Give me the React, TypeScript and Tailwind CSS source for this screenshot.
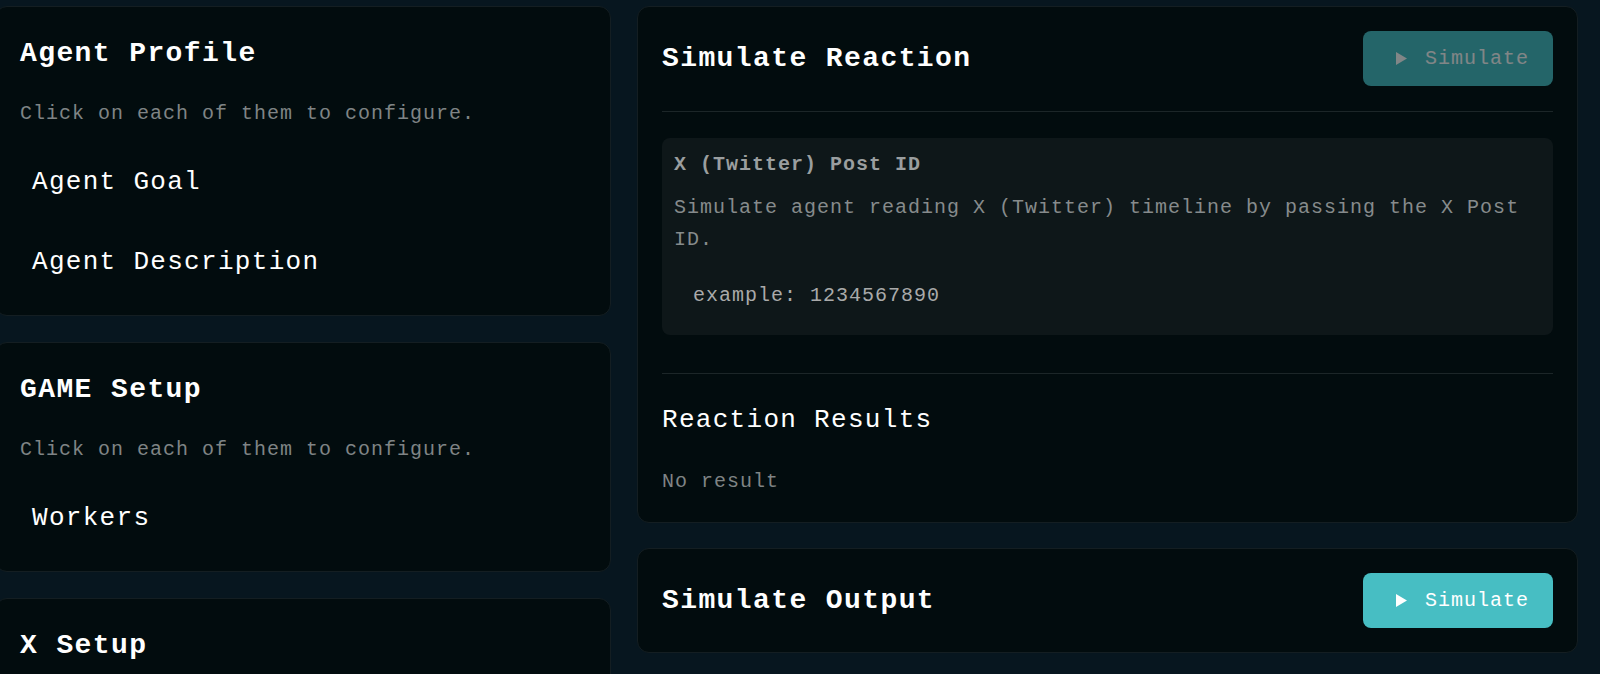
import React from 'react';

const mono = { fontFamily: '"Liberation Mono", "DejaVu Sans Mono", monospace' };

const PlayIcon: React.FC = () => (
  <svg width="11" height="13" viewBox="0 0 11 13" className="shrink-0">
    <polygon points="0,0 11,6.5 0,13" fill="currentColor" />
  </svg>
);

const SimulateButton: React.FC<{ disabled?: boolean }> = ({ disabled }) => (
  <button
    className={
      disabled
        ? 'flex items-center gap-[18px] h-[55px] w-[190px] pl-[33px] rounded-lg bg-[#47bec3] text-white text-[20px] tracking-wider opacity-50'
        : 'flex items-center gap-[18px] h-[55px] w-[190px] pl-[33px] rounded-lg bg-[#47bec3] text-white text-[20px] tracking-wider'
    }
  >
    <PlayIcon />
    <span className="leading-[30px]">Simulate</span>
  </button>
);

const ConfigCard: React.FC<{ title: string; items: string[] }> = ({ title, items }) => (
  <div className="rounded-xl border border-[#141e22] bg-[#020c0e] px-6 pt-[26px] pb-[13px]">
    <h2 className="text-[28px] leading-[42px] font-bold text-white tracking-wider">{title}</h2>
    <p className="mt-[24px] text-[20px] leading-[30px] text-[#7f8485] tracking-wider">
      Click on each of them to configure.
    </p>
    <div className="mt-[13px] flex flex-col">
      {items.map((item) => (
        <div key={item} className="h-[80px] flex items-center px-3 text-[26px] leading-[39px] text-white tracking-wider">
          {item}
        </div>
      ))}
    </div>
  </div>
);

const App: React.FC = () => {
  return (
    <div className="min-h-screen h-[674px] overflow-hidden bg-[#07161f]" style={mono}>
      <div className="flex gap-[26px] pt-[6px] -ml-[5px] mr-[22px]">
        {/* Left column */}
        <div className="w-[616px] shrink-0 flex flex-col gap-[26px]">
          <ConfigCard title="Agent Profile" items={['Agent Goal', 'Agent Description']} />
          <ConfigCard title="GAME Setup" items={['Workers']} />
          <div className="rounded-xl border border-[#141e22] bg-[#020c0e] px-6 pt-[26px] pb-6">
            <h2 className="text-[28px] leading-[42px] font-bold text-white tracking-wider">X Setup</h2>
            <p className="mt-[24px] text-[20px] leading-[30px] text-[#7f8485] tracking-wider">
              Click on each of them to configure.
            </p>
          </div>
        </div>

        {/* Right column */}
        <div className="flex-1 flex flex-col gap-[25px]">
          <div className="rounded-xl border border-[#141e22] bg-[#020c0e] px-6 pt-6 pb-[25px]">
            <div className="flex items-center justify-between">
              <h2 className="text-[28px] leading-[42px] font-bold text-white tracking-wider">Simulate Reaction</h2>
              <SimulateButton disabled />
            </div>
            <div className="mt-[25px] h-px bg-[#1c2628]" />
            <div className="mt-[26px] rounded-lg bg-[#0e1719] px-3 pt-3 pb-[23px]">
              <div className="text-[20px] leading-[30px] font-bold text-[#9a9e9f] tracking-wider">X (Twitter) Post ID</div>
              <p className="mt-[12px] text-[20px] leading-[32px] text-[#868b8c] tracking-wider">
                Simulate agent reading X (Twitter) timeline by passing the X Post ID.
              </p>
              <p className="mt-[24px] pl-[19px] text-[20px] leading-[32px] text-[#a9aaaa] tracking-wider">
                example: 1234567890
              </p>
            </div>
            <div className="mt-[38px] h-px bg-[#1c2628]" />
            <h3 className="mt-[27px] text-[26px] leading-[39px] text-white tracking-wider">Reaction Results</h3>
            <p className="mt-[27px] text-[20px] leading-[30px] text-[#7f8485] tracking-wider">No result</p>
          </div>

          <div className="rounded-xl border border-[#141e22] bg-[#020c0e] p-6">
            <div className="flex items-center justify-between">
              <h2 className="text-[28px] leading-[42px] font-bold text-white tracking-wider">Simulate Output</h2>
              <SimulateButton />
            </div>
          </div>
        </div>
      </div>
    </div>
  );
};

export default App;
